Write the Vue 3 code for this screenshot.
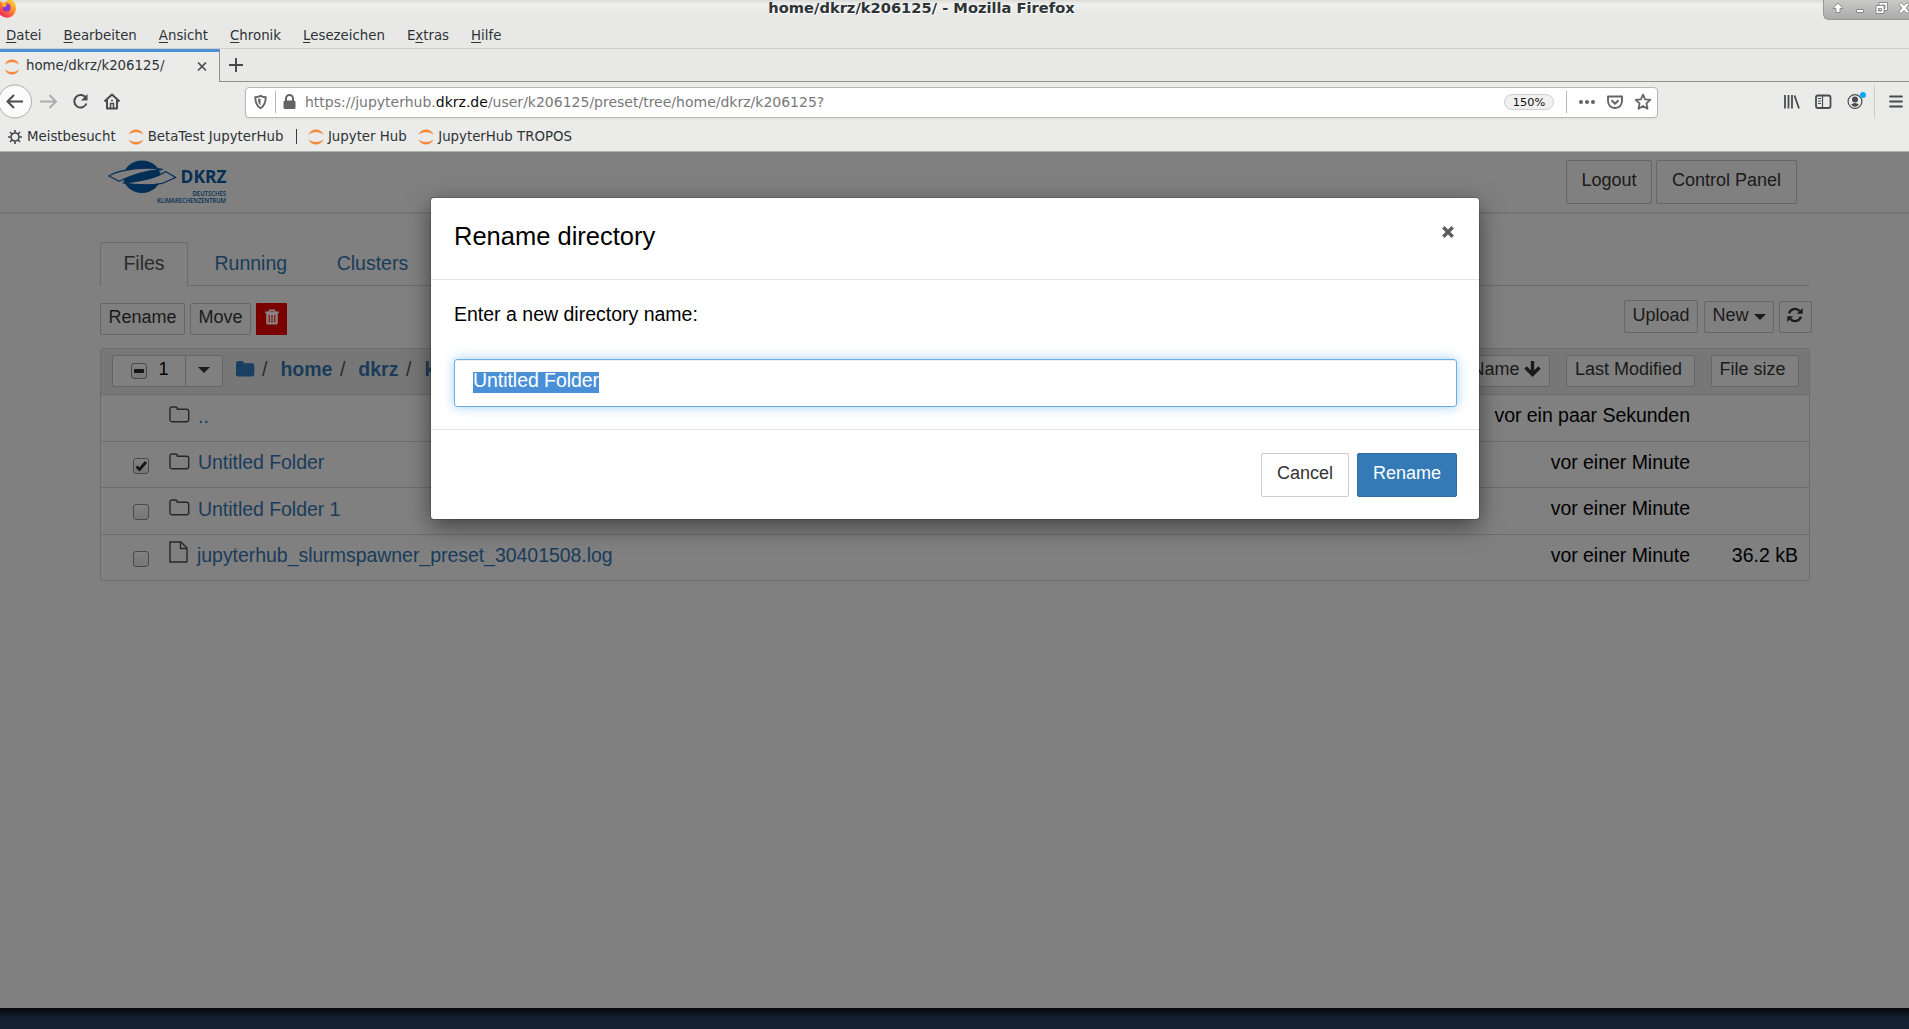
<script setup>
const menus = [['D', 'atei', ''], ['B', 'earbeiten', ''], ['A', 'nsicht', ''], ['C', 'hronik', ''], ['L', 'esezeichen', ''], ['x', 'tras', 'E'], ['H', 'ilfe', '']]
const bookmarks = ['BetaTest JupyterHub', '|', 'Jupyter Hub', 'JupyterHub TROPOS']
const rows = [
  { name: '..', time: 'vor ein paar Sekunden', box: false, icon: 'folder' },
  { name: 'Untitled Folder', time: 'vor einer Minute', box: true, checked: true, icon: 'folder' },
  { name: 'Untitled Folder 1', time: 'vor einer Minute', box: true, icon: 'folder' },
  { name: 'jupyterhub_slurmspawner_preset_30401508.log', time: 'vor einer Minute', size: '36.2 kB', box: true, icon: 'file' },
]
</script>

<template>
  <div class="screen">
    <div class="chrome">
      <div class="titlebar">
        <svg class="fox" width="20" height="20" viewBox="0 0 20 20">
          <defs>
            <linearGradient id="fx" x1="1" y1="0" x2="0.3" y2="1">
              <stop offset="0" stop-color="#fff04a" /><stop offset=".45" stop-color="#ff9a2a" /><stop offset="1" stop-color="#f5245c" />
            </linearGradient>
          </defs>
          <path d="M10 2C12 1 12-1 12-1 17 1 19 5 19 9.500A9 9 0 0 1 1 10C1 6 2 4 4 2L6 4Z" fill="url(#fx)" />
          <circle cx="9.500" cy="8.500" r="4" fill="#8b35d8" />
          <path d="M5 4Q9 3 10 6L8 8Q5 9 5 5Z" fill="#ffab2e" />
        </svg>
        <div class="wtitle">home/dkrz/k206125/ - Mozilla Firefox</div>
        <div class="wctl">
          <svg width="86" height="20" viewBox="0 0 86 20">
            <g fill="#fff" stroke="#8a8a8a" stroke-width="1">
              <path d="M14 3L19 8.500H16V12.500H12V8.500H9Z" />
              <path d="M32.500 9.500h7v3h-7z" />
              <path d="M55 2.500h8.500v8H55zM57.500 5v3.500H61V5z" fill-rule="evenodd" />
              <path d="M52 5.500h8v8h-8zM54.500 8.500v2.500h3V8.500z" fill-rule="evenodd" />
              <path d="M75 4.500L77 2.500 80 5.500 83 2.500 85 4.500 82 8 85 11.500 83 13.500 80 10.500 77 13.500 75 11.500 78 8Z" />
            </g>
          </svg>
        </div>
      </div>
      <div class="menubar">
        <span v-for="m in menus" :key="m[1]">{{ m[2] }}<u>{{ m[0] }}</u>{{ m[1] }}</span>
      </div>
      <div class="tabstrip">
        <div class="btab">
          <svg class="jup" width="16" height="16" viewBox="0 0 16 16"><path d="M1 5.500Q3 .5 8 .5T15 5.500Q12 3 8 3T1 5.500ZM1 10.500Q3 15.500 8 15.500T15 10.500Q12 13 8 13T1 10.500Z" fill="#f58a3c" /></svg>
          <span class="tt">home/dkrz/k206125/</span>
          <svg width="10" height="10" viewBox="0 0 10 10"><path d="M1 .5L9 8.500M9 .5L1 8.500" stroke="#4a4f51" stroke-width="1.700" /></svg>
        </div>
        <div class="newtab"><svg width="14" height="14" viewBox="0 0 14 14"><path d="M7 0V14M0 7H14" stroke="#43494b" stroke-width="1.900" /></svg></div>
      </div>
      <div class="nav">
        <svg width="240" height="36" viewBox="0 0 240 36" fill="none" stroke="#474d4f" stroke-width="2">
          <circle cx="15" cy="18.500" r="16.500" fill="#fbfbfb" stroke="#acaca8" stroke-width="1" />
          <path d="M23 18.500H8M14 12L7.500 18.500 14 25" />
          <path d="M40 18.500H55M49.500 12L56 18.500 49.500 25" stroke="#acaeae" />
          <path d="M86 15A6.300 6.300 0 1 0 86.500 20.500" /><path d="M87.500 11V17.500H81Z" fill="#474d4f" stroke="none" />
          <path d="M104.500 18.500L112 11.500 119.500 18.500M107 17V25.500H117V17" stroke-linejoin="round" /><path d="M110.500 25V20.500H113.500V25M111 17.500h2" stroke-width="1.500" />
        </svg>
        <div class="url">
          <svg width="60" height="28" viewBox="0 0 60 28" fill="none">
            <path d="M14.500 7.800Q12 9 9.300 9.200 9.300 17 14.500 20.300 19.700 17 19.700 9.200 17 9 14.500 7.800Z" stroke="#646464" stroke-width="1.900" />
            <path d="M14.500 10.500V17.500Q12 15.500 12 11Z" fill="#646464" />
            <path d="M29.500 3V25" stroke="#b8b8b8" />
            <rect x="37.500" y="12.500" width="12" height="8.500" rx="1.500" fill="#646464" /><path d="M40 13V10.500a3.500 3.500 0 0 1 7 0V13" stroke="#646464" stroke-width="2" />
          </svg>
          <span class="addr">https://jupyterhub.<b>dkrz.de</b>/user/k206125/preset/tree/home/dkrz/k206125?</span>
          <span class="pill">150%</span>
          <svg width="103" height="28" viewBox="0 0 103 28" fill="none" stroke="#646464">
            <path d="M12.500 3V25" stroke="#b8b8b8" />
            <g fill="#646464" stroke="none"><circle cx="27" cy="14" r="2" /><circle cx="33" cy="14" r="2" /><circle cx="39" cy="14" r="2" /></g>
            <path d="M54 8.500H68V13Q67.500 19.700 61 20 54.500 19.700 54 13ZM57.500 12.300L61 15.700 64.500 12.300" stroke-width="1.900" stroke-linejoin="round" />
            <path d="M89 6.500L91.100 11.400 96.300 11.900 92.400 15.400 93.500 20.800 89 18 84.500 20.800 85.600 15.400 81.700 11.900 86.900 11.400Z" stroke-width="1.800" stroke-linejoin="round" />
          </svg>
        </div>
        <svg class="tools" width="133" height="36" viewBox="0 0 133 36" fill="none" stroke="#474d4f" stroke-width="1.800">
          <path d="M9 12V25.500M12.500 12V25.500M16 12V25.500M18.500 12.500L23 25.500" />
          <rect x="40" y="12.500" width="14.500" height="12.500" rx="2" /><path d="M46.500 12V25" stroke-width="1.200" /><path d="M42 15.500h3M42 18h3M42 20.500h3" stroke-width="1" />
          <circle cx="79" cy="18.500" r="6.900" stroke-width="1.200" /><circle cx="79" cy="16.500" r="3" fill="#474d4f" stroke="none" /><path d="M75 21.500Q79 18.500 83 21.500 79 26 75 21.500Z" fill="#474d4f" stroke="none" />
          <circle cx="87" cy="12" r="3" fill="#08a9fb" stroke="none" />
          <path d="M98.500 2V35.500" stroke="#cbcbc9" stroke-width="1" />
          <path d="M114 13.500H126M114 18.500H126M114 23.500H126" stroke-linecap="round" />
        </svg>
      </div>
      <div class="bookmarks">
        <svg class="gear" width="14" height="14" viewBox="0 0 14 14" fill="none" stroke="#474d4f"><circle cx="7" cy="7" r="4" stroke-width="1.700" /><path d="M7 0V2.500M7 11.500V14M0 7H2.500M11.500 7H14M2 2L4 4M10 10L12 12M12 2L10 4M4 10L2 12" stroke-width="1.700" /></svg>
        <span class="bm first">Meistbesucht</span>
        <template v-for="(b, i) in bookmarks" :key="b">
          <span v-if="b === '|'" class="bar"></span>
          <span v-else class="bm" :class="'b' + i">
            <svg width="16" height="16" viewBox="0 0 16 16"><path d="M.5 5.500Q3 .5 8 .5T15.500 5.500Q12 3 8 3T.5 5.500ZM.5 10.500Q3 15.500 8 15.500T15.500 10.500Q12 13 8 13T.5 10.500Z" fill="#f58a3c" /></svg>{{ b }}
          </span>
        </template>
      </div>
    </div>

    <div class="page">
      <header class="hub">
        <svg class="logo" width="120" height="48" viewBox="0 0 120 48">
          <ellipse cx="34" cy="16.800" rx="18.500" ry="16.200" fill="#032e55" />
          <g fill="#808080" stroke="#032e55" stroke-width="1.200" stroke-linejoin="round">
            <path d="M.8 16Q7 12 17 10.300 36 6.500 54.500 9.300 30 11.500 11.200 21.300Z" />
            <path d="M67.800 17.500L57.500 11.500Q46 20 15 23 36 26.500 54.500 23.300Z" />
          </g>
          <path d="M14.500 21.800Q31 12.500 53.500 11.500 42 20.500 14.500 21.800Z" fill="#032e55" />
          <g fill="#032e55" font-family="Open Sans, sans-serif" font-weight="700">
            <text x="72.500" y="22.800" font-size="17.800" textLength="46" lengthAdjust="spacingAndGlyphs">DKRZ</text>
            <text x="84.500" y="35.500" font-size="6.500" font-weight="600" textLength="33.500" lengthAdjust="spacingAndGlyphs">DEUTSCHES</text>
            <text x="49" y="42.500" font-size="6.500" font-weight="600" textLength="69" lengthAdjust="spacingAndGlyphs">KLIMARECHENZENTRUM</text>
          </g>
        </svg>
        <div class="hb"><span class="btn big logout">Logout</span><span class="btn big panel">Control Panel</span></div>
      </header>
      <nav class="tabs">
        <span class="tab on">Files</span><span class="tab t2">Running</span><span class="tab t3">Clusters</span>
      </nav>
      <div class="actions">
        <div class="left">
          <span class="btn rn">Rename</span><span class="btn mv">Move</span>
          <span class="trash"><svg width="14" height="16" viewBox="0 0 14 16"><path d="M4.500 3V1.200H9.500V3M0 3.200H14" stroke="#8c8080" stroke-width="1.500" fill="none" /><path d="M1.200 4H12.800V14Q12.800 15.500 11.500 15.500H2.500Q1.200 15.500 1.200 14ZM3.700 6V13.500H4.700V6ZM6.500 6V13.500H7.500V6ZM9.300 6V13.500H10.300V6Z" fill-rule="evenodd" fill="#8c8080" /></svg></span>
        </div>
        <div class="right">
          <span class="btn up">Upload</span>
          <span class="btn nw">New<i class="caret"></i></span>
          <span class="btn rf"><svg width="16" height="16" viewBox="0 0 16 16"><path d="M2 6.300A6.200 6.200 0 0 1 12.600 4M14 9.700A6.200 6.200 0 0 1 3.400 12" fill="none" stroke="#1a1a1a" stroke-width="2.300" /><path d="M15.700 1V6.800H9.900ZM.3 15V9.200H6.100Z" fill="#1a1a1a" /></svg></span>
        </div>
      </div>
      <section class="list">
        <div class="lhead">
          <div class="sel"><div class="cnt"><span class="cb"><i class="dash"></i></span><span class="one">1</span></div><div class="drop"><i class="caret"></i></div></div>
          <svg class="fold" width="19" height="16" viewBox="0 0 19 16"><path d="M0 2.500Q0 0 2.500 0H5.500Q7.800 0 8 2.200H16Q18.300 2.200 18.300 4.500V13Q18.300 15.500 16 15.500H2.500Q0 15.500 0 13Z" fill="#1a3f60" /></svg>
          <div class="crumbs"><i>/</i><b>home</b><i>/</i><b>dkrz</b><i>/</i><b>k206125</b></div>
          <span class="btn name">Name<svg width="17" height="16" viewBox="0 0 17 16"><path d="M8.500 0V13M1.500 6.500L8.500 13.500 15.500 6.500" fill="none" stroke="#1a1a1a" stroke-width="3.400" /></svg></span>
          <span class="btn lm">Last Modified</span>
          <span class="btn fs">File size</span>
        </div>
        <div v-for="r in rows" :key="r.name" class="row">
          <div class="cbcell"><span v-if="r.box" class="cb"><svg v-if="r.checked" width="14" height="14" viewBox="0 0 14 14"><path d="M2.500 7.500L5.500 10.500 12 3" fill="none" stroke="#111616" stroke-width="2.800" /></svg></span></div>
          <div class="icell">
            <svg v-if="r.icon === 'folder'" width="21" height="17" viewBox="0 0 21 17"><path d="M1 3Q1 1 3 1H6.500Q8.300 1 8.400 3.200H17.500Q19.700 3.200 19.700 5.200V13.500Q19.700 15.700 17.500 15.700H3Q1 15.700 1 13.500Z" fill="none" stroke="#272727" stroke-width="1.400" /></svg>
            <svg v-else class="fi" width="19" height="22" viewBox="0 0 19 22"><path d="M1 1H12L18 7V21H1ZM11.500 1V7.500H18" fill="none" stroke="#272727" stroke-width="1.400" stroke-linejoin="round" /></svg>
          </div>
          <span class="nm" :class="r.icon">{{ r.name }}</span>
          <span class="tm">{{ r.time }}</span>
          <span class="sz">{{ r.size }}</span>
        </div>
      </section>
    </div>
    <div class="desk"></div>

    <div class="modal">
      <div class="mh"><span class="mt">Rename directory</span><svg width="12" height="12" viewBox="0 0 12 12"><path d="M1.300 1.300L10.700 10.700M10.700 1.300L1.300 10.700" stroke="#5c5c5c" stroke-width="3.400" /></svg></div>
      <div class="mb"><div class="lbl">Enter a new directory name:</div><div class="inp"><span>Untitled Folder</span></div></div>
      <div class="mf"><span class="btn cancel">Cancel</span><span class="btn ok">Rename</span></div>
    </div>
  </div>
</template>

<style>
body { margin: 0; overflow: hidden; }
</style>

<style scoped>
* { box-sizing: border-box; }
svg { display: block; flex: none; }
.screen { position: relative; width: 1909px; height: 1029px; overflow: hidden; background: #162232; display: flex; flex-direction: column; font-family: "Liberation Sans", Arial, sans-serif; font-size: 19.5px; white-space: nowrap; color: #000; }
.chrome { height: 152px; flex: none; background: #ebebe9; border-bottom: 1px solid #adb0a8; font-family: "DejaVu Sans", sans-serif; font-size: 13.33px; color: #2e3436; }
.titlebar { height: 20px; background: linear-gradient(#dbdbda, #efefee 4px, #e8e8e6 15px); display: flex; justify-content: space-between; align-items: flex-start; }
.fox { margin-left: -3px; margin-top: -1px; width: 20px; }
.wtitle { font-weight: bold; font-size: 14.67px; line-height: 16px; margin-left: 3px; text-shadow: 1px 1px 0 #fff; }
.wctl { width: 86px; height: 20px; overflow: hidden; border: 1px solid #999; border-width: 0 0 1px 1px; border-bottom-left-radius: 6px; background: linear-gradient(#c9c9c8, #aaa); }
.menubar { height: 29px; background: #e8e8e6; border-bottom: 1px solid #cfcfcc; display: flex; gap: 22px; padding: 1px 0 0 6px; line-height: 30px; }
.menubar u { text-underline-offset: 2px; }
.tabstrip { height: 33px; display: flex; background: #e8e8e6; }
.btab { width: 220px; height: 33px; border-top: 3px solid #4a90d9; border-right: 1px solid #8e908c; background: #ebebe9; display: flex; align-items: center; }
.btab .jup { margin-left: 4px; }
.tt { margin-left: 6px; width: 171px; line-height: 28px; height: 30px; }
.newtab { flex: 1; border-bottom: 1px solid #8e908c; padding: 9px 0 0 9px; }
.nav { height: 40px; padding-top: 1px; display: flex; }
.url { margin: 4px 0 0 5px; width: 1413px; height: 31px; background: #fff; border: 1px solid #b6b6b3; border-radius: 4px; display: flex; box-shadow: 0 1px 2px #ddd; }
.addr { font-size: 14px; line-height: 28px; color: #787878; flex: 1; margin-left: -1px; }
.addr b { font-weight: normal; color: #0c0c0d; }
.pill { width: 50px; height: 16px; margin-top: 6px; border: 1px solid #cfcfcf; border-radius: 8px; background: #f0f0f0; color: #111; font-size: 11.33px; line-height: 14px; text-align: center; }
.tools { margin-left: 118px; }
.bookmarks { height: 29px; padding-top: 2px; display: flex; align-items: flex-start; line-height: 26px; }
.gear { margin: 6px 0 0 8px; }
.bm { display: flex; align-items: center; gap: 4px; height: 26px; }
.bm.first { margin-left: 5px; }
.bm.b0 { margin-left: 12px; }
.bar { width: 1px; height: 15px; background: #3a4042; margin: 5px 0 0 12.5px; }
.bm.b2 { margin-left: 11px; }
.bm.b3 { margin-left: 11.5px; }
.page { height: 856px; flex: none; background: #808080; }
.hub { height: 62px; border-bottom: 2px solid #747474; display: flex; justify-content: space-between; padding: 8px 112px 0 108px; }
.hb { display: flex; gap: 4px; }
.btn { display: block; border: 1px solid #666; border-radius: 2px; font-size: 18px; line-height: 26px; height: 32px; text-align: center; color: #1a1a1a; flex: none; }
.big { height: 44px; line-height: 38px; }
.logout { width: 86px; }
.panel { width: 141px; }
.tabs { margin: 28px 99px 0 100px; height: 44px; border-bottom: 1px solid #6c6c6c; display: flex; }
.tab { height: 44px; line-height: 41px; color: #1a3c5a; padding-top: 1px; }
.tab.on { width: 88px; border: 1px solid #6c6c6c; border-bottom: 0; border-radius: 3px 3px 0 0; background: #808080; color: #2b2b2b; text-align: center; padding: 0; }
.t2 { margin-left: 26.5px; }
.t3 { margin-left: 49.5px; }
.actions { display: flex; justify-content: space-between; margin: 14px 97px 0 100px; height: 35px; }
.left, .right { display: flex; }
.left { padding-top: 3px; }
.rn { width: 85px; }
.mv { width: 61px; margin-left: 5px; }
.trash { width: 31px; height: 32px; margin-left: 5px; background: #7a0000; border-radius: 1px; padding: 6px 0 0 9px; }
.up { width: 74px; height: 33px; line-height: 28px; }
.nw { width: 70px; margin: 1px 0 0 6px; display: flex; align-items: flex-start; justify-content: center; gap: 5px; }
.caret { display: block; border: 6px solid transparent; border-top-color: #1a1a1a; border-bottom: 0; }
.nw .caret { margin-top: 12px; }
.rf { width: 33px; margin: 1px 0 0 5px; padding: 5px 0 0 7px; }
.list { margin: 13px 99px 0 100px; border: 1px solid #6c6c6c; border-radius: 3px; height: 233px; }
.lhead { height: 45px; background: #777; display: flex; padding: 6px 10px 0 11px; }
.sel { display: flex; width: 111px; height: 32px; border: 1px solid #646464; border-radius: 2px; background: #808080; }
.cnt { width: 73px; border-right: 1px solid #646464; display: flex; padding-left: 18px; }
.drop { padding: 11px 0 0 12px; }
.cb { display: block; width: 16px; height: 16px; border: 1px solid #4a4a4a; border-radius: 3px; background: linear-gradient(#828282, #767676); }
.cnt .cb { margin-top: 7px; padding: 5px 2px; }
.dash { display: block; height: 4px; background: #111616; border-radius: 1px; }
.one { font-size: 18px; line-height: 26px; margin-left: 11.5px; }
.fold { margin: 6px 0 0 13px; }
.crumbs { display: flex; line-height: 28px; color: #1a3c5a; flex: 1; }
.crumbs i { font-style: normal; color: #2b2b2b; margin-left: 7px; margin-right: 13px; }
.crumbs b + i { margin-left: 7.5px; margin-right: 13px; }
.lhead .btn { background: #808080; }
.name { width: 88px; display: flex; justify-content: center; gap: 4px; }
.name svg { margin-top: 5px; }
.lm { width: 129px; margin-left: 16px; padding-right: 4px; }
.fs { width: 88px; margin-left: 16px; padding-right: 5px; }
.row { border-top: 1px solid #6c6c6c; height: 47px; display: flex; line-height: 42px; }
.row:nth-child(odd) { height: 46px; line-height: 41px; }
.row:nth-child(even) .tm { line-height: 40px; }
.row .nm.file, .row:nth-child(odd) .tm { line-height: 41px; }
.cbcell { width: 68px; padding: 16px 0 0 32px; }
.icell { width: 29px; padding-top: 11px; }
.icell .fi { margin-top: -5px; }
.nm { flex: 1; color: #1a3c5a; letter-spacing: -.04px; }
.nm.file { margin-left: -1px; }
.tm { letter-spacing: -.03px; }
.sz { width: 108px; text-align: right; margin-right: 11px; }
.desk { height: 21px; background: linear-gradient(#04070b, #131f2b 9px, #162234 13px); }
.modal { position: absolute; left: 431px; top: 198px; width: 1048px; height: 321px; background: #fff; border-radius: 3px; box-shadow: 0 0 0 1px rgba(0,0,0,.15), 0 7px 23px rgba(0,0,0,.5); }
.mh { height: 82px; border-bottom: 1px solid #e5e5e5; display: flex; justify-content: space-between; padding: 28px 25px 0 23px; }
.mt { font-size: 25.5px; line-height: 21px; }
.mb { height: 149px; padding: 26px 22px 0 23px; }
.lbl { line-height: 16px; height: 53px; }
.inp { height: 48px; border: 1px solid #66afe9; border-radius: 3px; box-shadow: 0 0 12px rgba(102,175,233,.6), inset 0 1px 1px rgba(0,0,0,.075); padding: 12px 0 0 18px; }
.inp span { display: block; width: 126px; height: 21px; line-height: 16.5px; background: #4a90d9; color: #fff; letter-spacing: -.05px; }
.mf { border-top: 1px solid #e5e5e5; padding: 23px 22px 0 0; display: flex; justify-content: flex-end; gap: 8px; }
.mf .btn { height: 44px; line-height: 39px; }
.cancel { width: 88px; border-color: #ccc; color: #333; }
.ok { width: 100px; background: #337ab7; border-color: #2e6da4; color: #fff; }
</style>
